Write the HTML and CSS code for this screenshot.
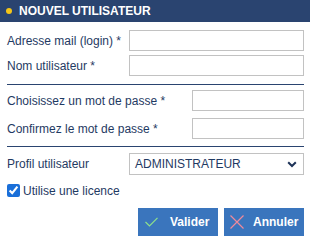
FILE: index.html
```html
<!DOCTYPE html>
<html lang="fr">
<head>
<meta charset="utf-8">
<link rel="stylesheet" href="styles.css">
</head>
<body>
<div class="dialog">
  <div class="header"><span class="dot"></span><span class="title">NOUVEL UTILISATEUR</span></div>
  <div class="form">
    <div class="section s1">
      <div class="row"><label class="label">Adresse mail (login) *</label><div class="input"></div></div>
      <div class="row"><label class="label">Nom utilisateur *</label><div class="input"></div></div>
    </div>
    <div class="section s2">
      <div class="row"><label class="label">Choisissez un mot de passe *</label><div class="input"></div></div>
      <div class="row"><label class="label">Confirmez le mot de passe *</label><div class="input"></div></div>
    </div>
    <div class="section s3">
      <div class="row"><label class="label">Profil utilisateur</label>
        <div class="select"><span>ADMINISTRATEUR</span>
          <svg width="10" height="7" viewBox="0 0 10 7"><path d="M1.2 1.2 L5 5 L8.8 1.2" fill="none" stroke="#1e3358" stroke-width="2"/></svg>
        </div>
      </div>
      <div class="check"><input type="checkbox" checked><span>Utilise une licence</span></div>
      <div class="buttons">
        <button class="btn ok"><svg width="13" height="10" viewBox="0 0 13 10"><path d="M0.5 5 L4.5 9 L12.5 0.8" fill="none" stroke="#8ee08a" stroke-width="1.2"/></svg><span>Valider</span></button>
        <button class="btn cancel"><svg width="14" height="14" viewBox="0 0 14 14"><path d="M0.5 0.5 L13.5 13.5 M13.5 0.5 L0.5 13.5" fill="none" stroke="#f08a9a" stroke-width="1.2"/></svg><span>Annuler</span></button>
      </div>
    </div>
  </div>
</div>
</body>
</html>
```

FILE: styles.css
```css
* { box-sizing: border-box; }
html, body { margin: 0; padding: 0; background: #fff; }
body { font-family: "Liberation Sans", Arial, sans-serif; font-size: 12px; color: #1f3a63; }
.dialog { width: 310px; height: 240px; }
.header {
  height: 22px; background: #2a4470; display: flex; align-items: center; padding-left: 6px; gap: 7px;
}
.dot { width: 6px; height: 6px; border-radius: 50%; background: #f5c518; }
.title { color: #fff; font-weight: bold; font-size: 12px; }
.form { padding: 0 6px 0 7px; }
.section { display: flex; flex-direction: column; }
.s1 { padding-top: 8px; gap: 4px; padding-bottom: 8px; border-bottom: 1px solid #2a4470; }
.s2 { padding-top: 5px; gap: 7px; padding-bottom: 7px; border-bottom: 1px solid #2a4470; }
.s3 { padding-top: 6px; }
.row { display: flex; align-items: center; }
.label { white-space: nowrap; flex-shrink: 0; }
.s1 .label, .s3 .label { width: 122px; }
.s2 .label { width: 185px; }
.input { flex: 1; height: 21px; border: 1px solid #c2c2c2; background: #fff; }
.select {
  flex: 1; height: 22px; border: 1px solid #c2c2c2; display: flex; align-items: center;
  justify-content: space-between; padding: 0 6px 0 5px; color: #1f3a63;
}
.check { display: flex; align-items: center; gap: 3px; margin-top: 9px; height: 13px; }
.check input { margin: 0; width: 13px; height: 13px; accent-color: #1a6fd9; }
.buttons { display: flex; justify-content: flex-end; gap: 6px; margin-top: 11px; }
.btn {
  height: 28px; border: none; background: #3a75bd; color: #fff; font-family: inherit; font-weight: bold;
  font-size: 12px; display: flex; align-items: center; padding: 0 0 0 7px; margin: 0; width: 80px;
}
.ok svg { margin-right: 12px; }
.cancel { padding-left: 6px; }
.cancel svg { margin-right: 9px; }
```
